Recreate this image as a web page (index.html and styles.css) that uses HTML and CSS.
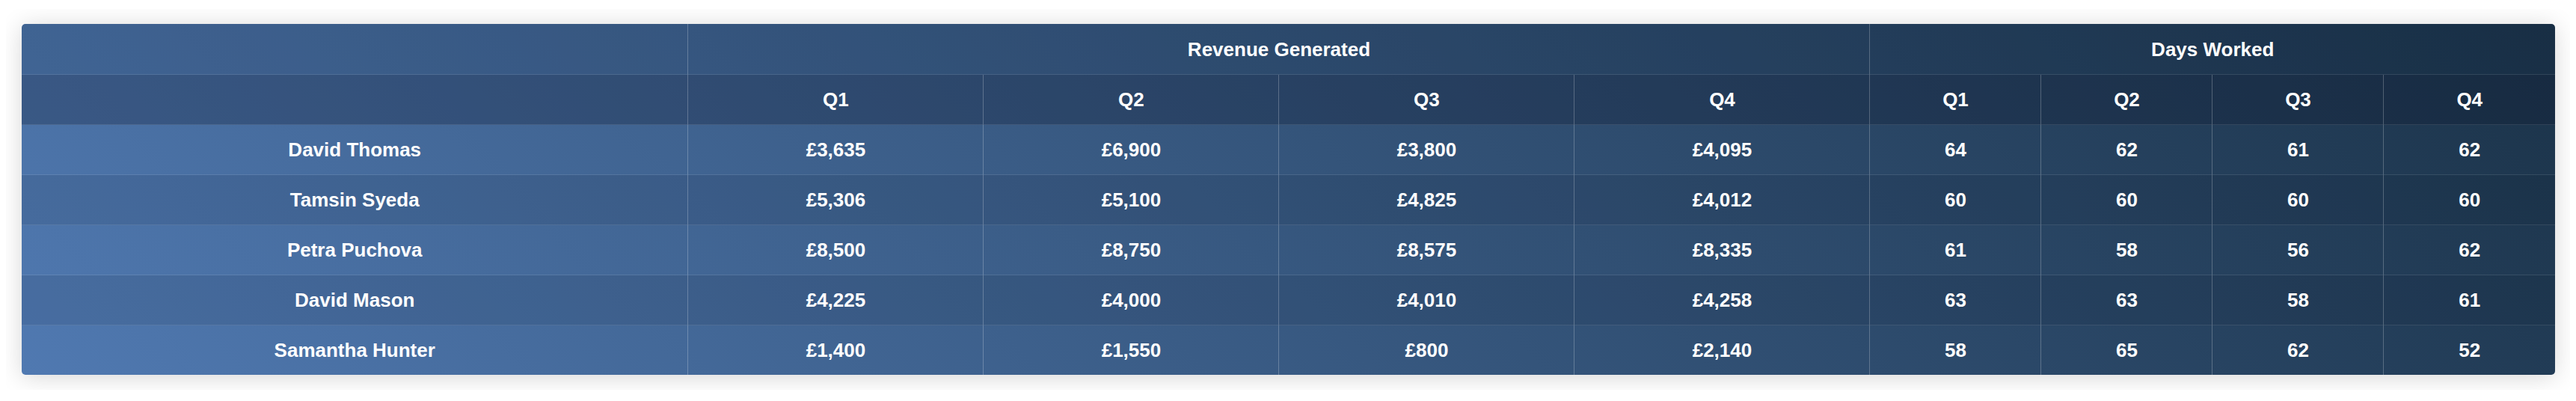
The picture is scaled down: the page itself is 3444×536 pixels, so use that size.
FILE: index.html
```html
<!DOCTYPE html>
<html lang="en">
<head>
<meta charset="utf-8">
<title>Revenue and Days Worked</title>
<link rel="stylesheet" href="styles.css">
</head>
<body>
<div class="frame">
  <div class="card">
    <table class="grid">
      <colgroup>
        <col class="c-name">
        <col class="c-rev"><col class="c-rev"><col class="c-rev"><col class="c-rev">
        <col class="c-day"><col class="c-day"><col class="c-day"><col class="c-day">
      </colgroup>
      <thead>
        <tr class="h-top">
          <th></th>
          <th colspan="4">Revenue Generated</th>
          <th colspan="4">Days Worked</th>
        </tr>
        <tr class="h-sub">
          <th></th>
          <th>Q1</th><th>Q2</th><th>Q3</th><th>Q4</th>
          <th>Q1</th><th>Q2</th><th>Q3</th><th>Q4</th>
        </tr>
      </thead>
      <tbody>
        <tr>
          <td>David Thomas</td>
          <td>£3,635</td><td>£6,900</td><td>£3,800</td><td>£4,095</td>
          <td>64</td><td>62</td><td>61</td><td>62</td>
        </tr>
        <tr>
          <td>Tamsin Syeda</td>
          <td>£5,306</td><td>£5,100</td><td>£4,825</td><td>£4,012</td>
          <td>60</td><td>60</td><td>60</td><td>60</td>
        </tr>
        <tr>
          <td>Petra Puchova</td>
          <td>£8,500</td><td>£8,750</td><td>£8,575</td><td>£8,335</td>
          <td>61</td><td>58</td><td>56</td><td>62</td>
        </tr>
        <tr>
          <td>David Mason</td>
          <td>£4,225</td><td>£4,000</td><td>£4,010</td><td>£4,258</td>
          <td>63</td><td>63</td><td>58</td><td>61</td>
        </tr>
        <tr>
          <td>Samantha Hunter</td>
          <td>£1,400</td><td>£1,550</td><td>£800</td><td>£2,140</td>
          <td>58</td><td>65</td><td>62</td><td>52</td>
        </tr>
      </tbody>
    </table>
  </div>
</div>
</body>
</html>
```
FILE: styles.css
```css
html, body {
  background: #ffffff;
}

body {
  margin: 12px 8px 14px 8px;
  font-family: "Liberation Sans", Arial, Helvetica, sans-serif;
}

.frame {
  overflow: hidden;
  padding: 20px 20px 20px 21px;
}

.card {
  border-radius: 5px;
  overflow: hidden;
  background: linear-gradient(45deg, #5079b1 0%, #1b3349 100%);
  box-shadow: 0 3px 32px rgba(0, 0, 0, 0.16);
}

.grid {
  width: 100%;
  border-collapse: collapse;
  table-layout: fixed;
  color: #ffffff;
  font-size: 26px;
  font-weight: bold;
  line-height: 30px;
}

.c-rev {
  width: 395px;
}

.c-day {
  width: 229px;
}

.grid th,
.grid td {
  height: 66px;
  padding: 0 8px;
  text-align: center;
  vertical-align: middle;
  font-weight: bold;
  border-left: 1px solid rgba(255, 255, 255, 0.24);
  border-top: 1px solid rgba(255, 255, 255, 0.1);
}

.grid tr > :first-child {
  border-left: none;
}

.grid .h-top th {
  border-top: none;
  height: 67px;
}

.h-top {
  background: rgba(10, 20, 40, 0.14);
}

.h-sub {
  background: rgba(10, 20, 40, 0.27);
}

.grid tbody tr:nth-child(even) {
  background: rgba(10, 20, 40, 0.1);
}
```
